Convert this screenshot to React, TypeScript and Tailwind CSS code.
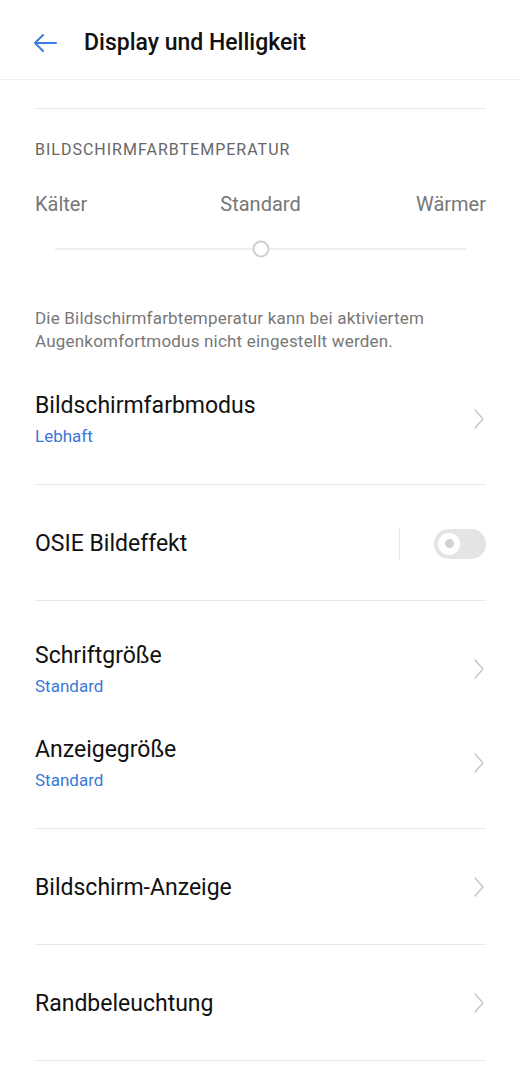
import React from "react";

const Chevron = () => (
  <svg width="12" height="22" viewBox="0 0 12 22" fill="none" className="shrink-0">
    <path d="M2 2l8 9-8 9" stroke="#c9c9c9" strokeWidth="1.6" strokeLinecap="round" strokeLinejoin="round" />
  </svg>
);

const Divider = () => <div className="h-px bg-[#e9e9e9]" />;

const NavRow = ({ title, value }: { title: string; value?: string }) => (
  <div className="flex items-center justify-between">
    <div className="flex flex-col">
      <span className="pt-[2px] text-[23px] leading-[28px] text-[#111]">{title}</span>
      {value && <span className="mt-[5px] text-[17px] leading-[22px] text-[#3a78d9]">{value}</span>}
    </div>
    <div className="mr-[1px]">
      <Chevron />
    </div>
  </div>
);

export default function App() {
  return (
    <div className="min-h-[1080px] w-[521px] bg-white font-['Roboto',sans-serif]">
      {/* Header */}
      <div className="flex h-[80px] items-center border-b border-[#eeeeee] pl-[33px] pt-[6px]">
        <svg width="24" height="18" viewBox="0 0 24 18" fill="none">
          <path d="M23 9H2M10 1L2 9l8 8" stroke="#3d7ddf" strokeWidth="2" strokeLinecap="round" strokeLinejoin="round" />
        </svg>
        <h1 className="ml-[27px] text-[23px] font-medium leading-[28px] text-[#111]">Display und Helligkeit</h1>
      </div>

      <div className="px-[35px]">
        <div className="h-[28px]" />
        <Divider />

        {/* Farbtemperatur */}
        <div className="mt-[31px] text-[16px] leading-[20px] tracking-[1px] text-[#666]">BILDSCHIRMFARBTEMPERATUR</div>
        <div className="mt-[32px] grid grid-cols-3 text-[20px] leading-[24px] text-[#777]">
          <span>Kälter</span>
          <span className="text-center">Standard</span>
          <span className="text-right">Wärmer</span>
        </div>
        <div className="mt-[23px] flex h-[20px] items-center px-[20px]">
          <div className="relative h-[2px] w-full bg-[#eeeeee]">
            <div className="absolute left-1/2 top-1/2 h-[17px] w-[17px] -translate-x-1/2 -translate-y-1/2 rounded-full border-2 border-[#cfcfcf] bg-white" />
          </div>
        </div>
        <p className="mt-[48px] text-[17px] leading-[23px] tracking-[0.2px] text-[#777]">
          Die Bildschirmfarbtemperatur kann bei aktiviertem Augenkomfortmodus nicht eingestellt werden.
        </p>

        <div className="py-[37px]">
          <NavRow title="Bildschirmfarbmodus" value="Lebhaft" />
        </div>
        <Divider />

        {/* OSIE */}
        <div className="flex h-[115px] items-center justify-between pt-[2px]">
          <span className="text-[23px] leading-[28px] text-[#111]">OSIE Bildeffekt</span>
          <div className="flex items-center">
            <div className="h-[32px] w-px bg-[#e8e8e8]" />
            <div className="ml-[34px] flex h-[30px] w-[52px] items-center rounded-full bg-[#e4e4e4] pl-[4px]">
              <div className="flex h-[22px] w-[22px] items-center justify-center rounded-full bg-white">
                <div className="h-[9px] w-[9px] rounded-full bg-[#d2d2d2]" />
              </div>
            </div>
          </div>
        </div>
        <Divider />

        <div className="flex flex-col gap-[37px] pb-[37px] pt-[39px]">
          <NavRow title="Schriftgröße" value="Standard" />
          <NavRow title="Anzeigegröße" value="Standard" />
        </div>
        <Divider />

        <div className="flex h-[115px] flex-col justify-center">
          <NavRow title="Bildschirm-Anzeige" />
        </div>
        <Divider />

        <div className="flex h-[115px] flex-col justify-center">
          <NavRow title="Randbeleuchtung" />
        </div>
        <Divider />
      </div>
    </div>
  );
}
